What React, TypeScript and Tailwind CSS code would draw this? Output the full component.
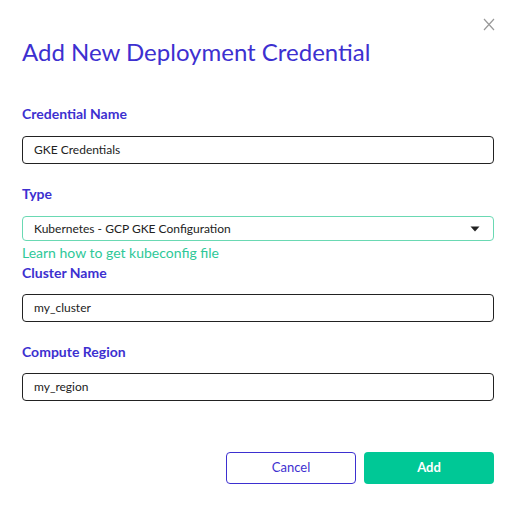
import React from "react";

const font = { fontFamily: "Lato, 'Open Sans', sans-serif" };

function Label({ children, className = "" }: { children: React.ReactNode; className?: string }) {
  return <div className={`text-[14px] font-bold leading-[16px] text-[#3d30d0] ${className}`}>{children}</div>;
}

function Field({ value, className = "" }: { value: string; className?: string }) {
  return (
    <div className={`flex h-[28px] items-center rounded-[4px] border border-[#222] px-[11px] text-[12px] text-[#222] ${className}`}>
      {value}
    </div>
  );
}

export default function App() {
  return (
    <div className="relative h-[522px] w-[516px] bg-white px-[22px]" style={font}>
      <div className="flex justify-end pt-[18px]">
        <svg width="12" height="13" viewBox="0 0 12 13" className="mr-[-1px]">
          <path d="M1 1 L11 12 M11 1 L1 12" stroke="#999" strokeWidth="1.2" fill="none" />
        </svg>
      </div>
      <h1 className="mt-[6px] text-[24px] leading-[30px] font-normal text-[#3d30d0]">Add New Deployment Credential</h1>

      <Label className="mt-[39px]">Credential Name</Label>
      <Field value="GKE Credentials" className="mt-[14px] h-[27px]" />

      <Label className="mt-[22px]">Type</Label>
      <div className="mt-[14px] flex h-[25px] items-center justify-between rounded-[4px] border border-[#6ad9b3] px-[11px] text-[12px] text-[#222]">
        <span>Kubernetes - GCP GKE Configuration</span>
        <svg width="10" height="6" viewBox="0 0 10 6" className="mr-[2px]">
          <path d="M0.5 0.5 L9.5 0.5 L5 5.5 Z" fill="#222" />
        </svg>
      </div>
      <a className="mt-[4px] block text-[14px] leading-[16px] text-[#2ec898]">Learn how to get kubeconfig file</a>
      <Label className="mt-[4px]">Cluster Name</Label>
      <Field value="my_cluster" className="mt-[13px]" />

      <Label className="mt-[22px]">Compute Region</Label>
      <Field value="my_region" className="mt-[13px]" />

      <div className="mt-[51px] flex justify-end gap-[8px]">
        <button className="h-[32px] w-[130px] rounded-[4px] border border-[#3d30d0] bg-white text-[13px] text-[#3d30d0]">Cancel</button>
        <button className="h-[32px] w-[130px] rounded-[4px] bg-[#00c896] text-[13px] font-bold text-white">Add</button>
      </div>
    </div>
  );
}
